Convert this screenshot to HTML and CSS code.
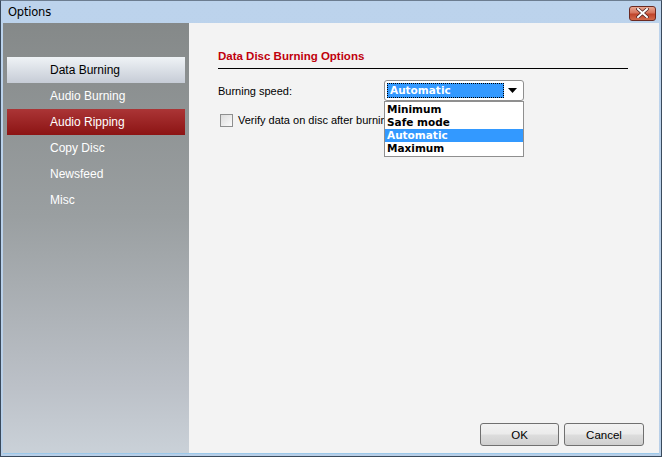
FILE: index.html
```html
<!DOCTYPE html>
<html>
<head>
<meta charset="utf-8">
<link rel="stylesheet" href="styles.css">
</head>
<body>
<div class="window">
  <div class="titlebar">
    <span class="title">Options</span>
    <span class="close"><svg width="13" height="10" viewBox="0 0 13 10"><path d="M2 1 L11 9 M11 1 L2 9" stroke="#4a2020" stroke-width="3.4" stroke-linecap="square"/><path d="M2 1 L11 9 M11 1 L2 9" stroke="#ffffff" stroke-width="2" stroke-linecap="square"/></svg></span>
  </div>
  <div class="client">
    <div class="sidebar">
      <div class="nav-item active">Data Burning</div>
      <div class="nav-item">Audio Burning</div>
      <div class="nav-item hover">Audio Ripping</div>
      <div class="nav-item">Copy Disc</div>
      <div class="nav-item">Newsfeed</div>
      <div class="nav-item">Misc</div>
    </div>
    <div class="content">
      <div class="heading">Data Disc Burning Options</div>
      <div class="rule"></div>
      <div class="row speed">
        <span class="label">Burning speed:</span>
        <div class="combo">
          <span class="combo-value">Automatic</span>
          <span class="combo-arrow"><svg width="9" height="5" viewBox="0 0 9 5"><path d="M0 0 H9 L4.5 5 Z" fill="#000"/></svg></span>
          <div class="dropdown">
            <div class="opt">Minimum</div>
            <div class="opt">Safe mode</div>
            <div class="opt sel">Automatic</div>
            <div class="opt">Maximum</div>
          </div>
        </div>
      </div>
      <div class="row check">
        <span class="checkbox"></span>
        <span class="check-label">Verify data on disc after burning</span>
      </div>
      <div class="buttons">
        <button class="btn">OK</button>
        <button class="btn">Cancel</button>
      </div>
    </div>
  </div>
</div>
</body>
</html>
```

FILE: styles.css
```css
html, body {
  margin: 0;
  padding: 0;
  background: #ffffff;
}
body {
  font-family: "Liberation Sans", Arial, sans-serif;
  font-size: 11px;
}
.window {
  width: 662px;
  height: 457px;
  box-sizing: border-box;
  background: linear-gradient(#bcd3ec, #b8cfe8);
  border: 1px solid #3a4a5c;
  border-top-color: #6c7d90;
  display: flex;
  flex-direction: column;
  padding: 0 2px 2px 2px;
}
.titlebar {
  height: 22px;
  display: flex;
  align-items: center;
  justify-content: space-between;
  padding-left: 5px;
  padding-right: 3px;
  flex: none;
}
.title {
  font-family: "DejaVu Sans", sans-serif;
  font-size: 11.5px;
  color: #000;
  letter-spacing: -0.2px;
}
.close {
  width: 27px;
  height: 15px;
  box-sizing: border-box;
  border: 1px solid #6b2a22;
  border-radius: 3px;
  background: linear-gradient(#e9a792 0%, #d6745d 45%, #c0442b 55%, #d26a4c 100%);
  display: flex;
  align-items: center;
  justify-content: center;
  margin-top: 2px;
}
.client {
  flex: 1;
  display: flex;
  border-bottom: 1px solid #9cc9ea;
  min-height: 0;
}
.sidebar {
  width: 186px;
  flex: none;
  background: linear-gradient(#858989 0%, #9a9fa1 45%, #bcc1c8 85%, #cad1d8 100%);
  padding-top: 34px;
  box-sizing: border-box;
}
.nav-item {
  height: 26px;
  margin-left: 4px;
  width: 178px;
  box-sizing: border-box;
  padding-left: 43px;
  line-height: 26px;
  color: #ffffff;
  font-family: "Liberation Sans", Arial, sans-serif;
  font-size: 12px;
}
.nav-item.active {
  background: linear-gradient(#eff3f6, #c6ccd6);
  color: #000;
}
.nav-item.hover {
  background: linear-gradient(#ab3536, #8c1414);
}
.content {
  flex: 1;
  background: #f3f3f3;
  display: flex;
  flex-direction: column;
  padding: 25px 31px 7px 29px;
  position: relative;
}
.heading {
  font-family: "Liberation Sans", Arial, sans-serif;
  font-weight: bold;
  font-size: 11.5px;
  color: #c0000c;
  height: 16px;
  line-height: 16px;
}
.rule {
  height: 1px;
  background: #000;
  margin-top: 4px;
}
.row {
  display: flex;
  align-items: center;
}
.speed {
  margin-top: 11px;
  height: 21px;
}
.label, .check-label {
  font-family: "Liberation Sans", Arial, sans-serif;
  font-size: 11px;
  color: #000;
}
.label {
  width: 166px;
  padding-top: 1px;
}
.combo {
  position: relative;
  width: 140px;
  height: 21px;
  box-sizing: border-box;
  border: 1px solid #8f8f8f;
  border-radius: 3px;
  background: #ffffff;
  display: flex;
  align-items: center;
  padding: 2px;
}
.combo-value {
  width: 117px;
  height: 15px;
  box-sizing: border-box;
  background: #3399ff;
  border: 1px dotted #000;
  color: #fff;
  font-family: "DejaVu Sans", sans-serif;
  font-weight: bold;
  font-size: 10.5px;
  line-height: 13px;
  padding-left: 2px;
}
.combo-arrow {
  flex: 1;
  display: flex;
  justify-content: center;
  align-items: center;
}
.dropdown {
  position: absolute;
  left: -1px;
  top: 20px;
  width: 140px;
  box-sizing: border-box;
  border: 1px solid #8f8f8f;
  background: #fff;
  padding: 1px 0;
  z-index: 2;
}
.opt {
  height: 13px;
  line-height: 13px;
  padding-left: 2px;
  font-family: "DejaVu Sans", sans-serif;
  font-weight: bold;
  font-size: 10.5px;
  color: #000;
}
.opt.sel {
  background: #3399ff;
  color: #fff;
}
.check {
  margin-top: 12px;
  height: 14px;
}
.checkbox {
  width: 13px;
  height: 13px;
  box-sizing: border-box;
  border: 1px solid #8e8f8f;
  background: linear-gradient(135deg, #dcdcdc, #fbfbfb);
  margin-left: 2px;
  margin-right: 5px;
}
.buttons {
  margin-top: auto;
  display: flex;
  justify-content: flex-end;
  gap: 5px;
  margin-right: -16px;
}
.btn {
  width: 79px;
  height: 23px;
  box-sizing: border-box;
  border: 1px solid #707070;
  border-radius: 3px;
  background: linear-gradient(#f2f2f2 0%, #ebebeb 48%, #dddddd 52%, #cfcfcf 100%);
  font-family: "Liberation Sans", Arial, sans-serif;
  font-size: 11.5px;
  color: #000;
  padding: 0;
}
.btn + .btn {
  width: 80px;
}
```
